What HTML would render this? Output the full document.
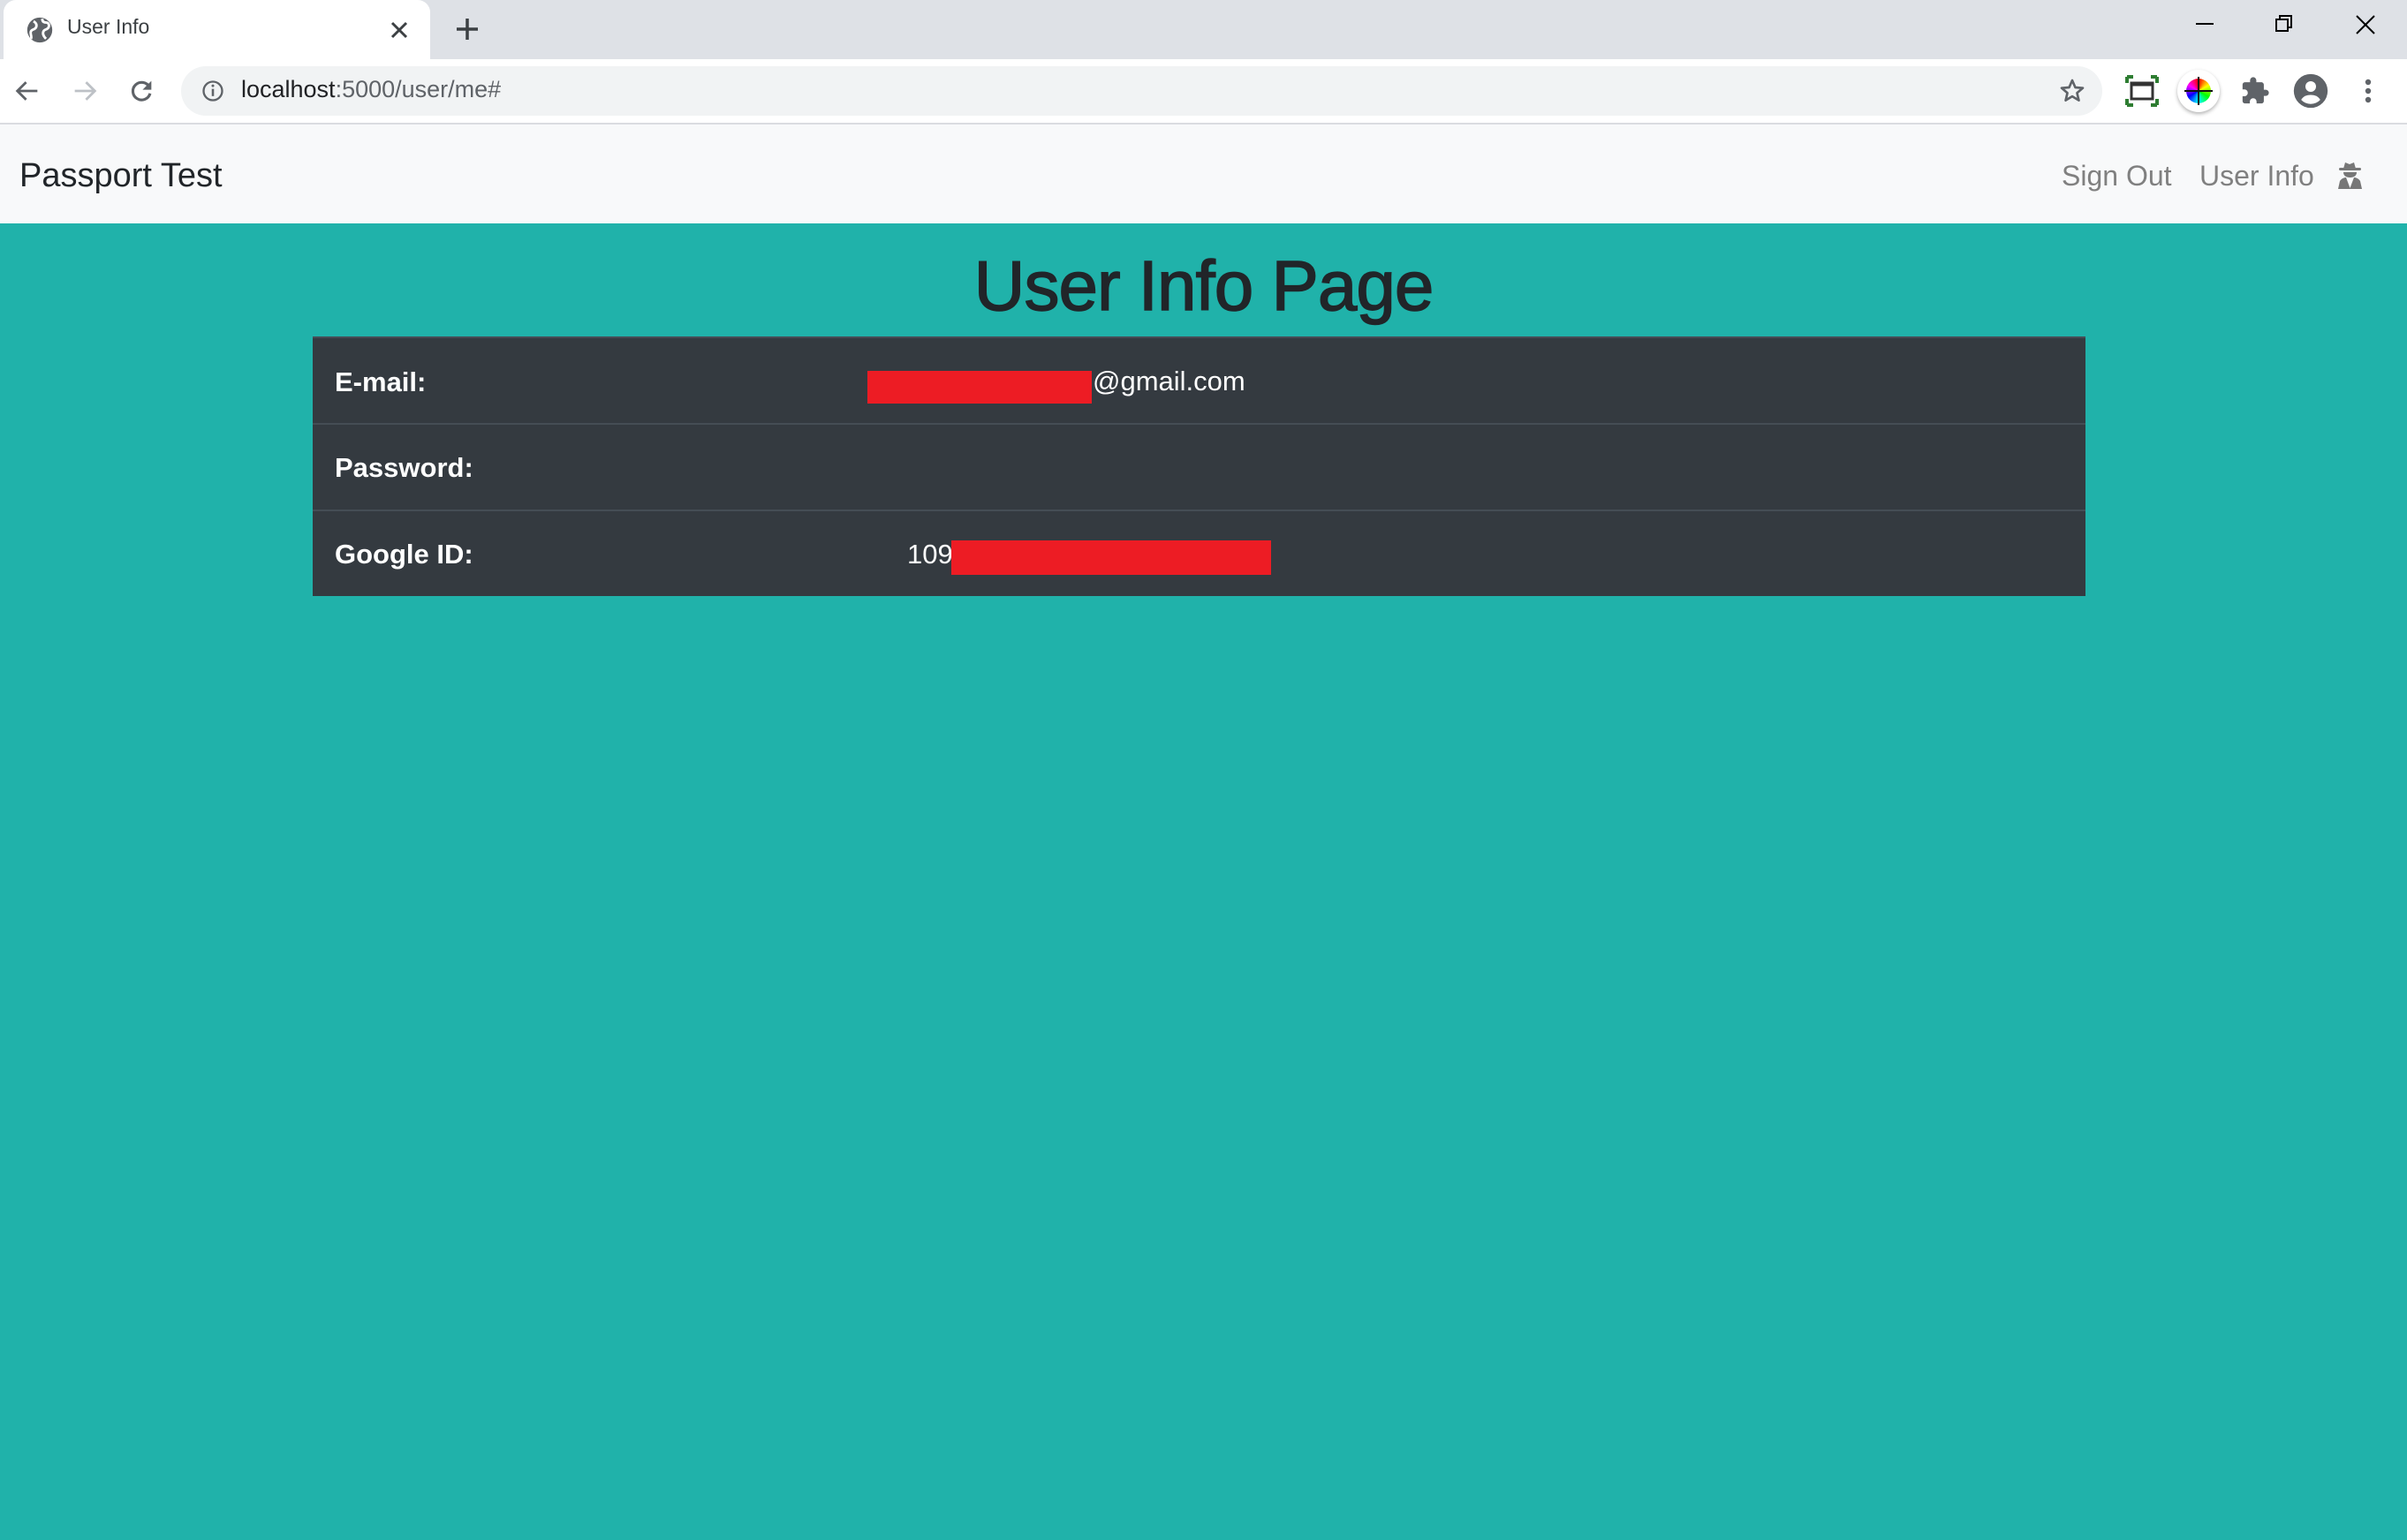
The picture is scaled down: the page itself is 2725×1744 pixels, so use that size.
<!DOCTYPE html>
<html><head><meta charset="utf-8"><style>
*{margin:0;padding:0;box-sizing:border-box}
body{width:2725px;height:1744px;position:relative;overflow:hidden;background:#20b2aa;font-family:"Liberation Sans",sans-serif}
.a{position:absolute}
</style></head><body>
<div class="a" style="left:0;top:0;width:2725px;height:67px;background:#dee1e6"></div>
<div class="a" style="left:4px;top:0;width:483px;height:67px;background:#fff;border-radius:14px 14px 0 0"></div>
<svg class="a" style="left:28px;top:17px" width="34" height="34" viewBox="0 0 24 24"><circle cx="12" cy="12" r="10" fill="#5f6368"/><path d="M7 5c2 1 3 3 2 5s-3 1-4 3 1 4 0 6M14 3c0 2 1 3 3 3s3 2 2 4-3 1-4 3 0 4 2 6" stroke="#fff" stroke-width="2" fill="none"/></svg>
<div class="a" style="left:76px;top:17px;font-size:23px;color:#3c4043">User Info</div>
<svg class="a" style="left:440px;top:22px" width="24" height="24"><path d="M4 4L20 20M20 4L4 20" stroke="#3c4043" stroke-width="3"/></svg>
<svg class="a" style="left:514px;top:18px" width="30" height="30"><path d="M15 3V27M3 15H27" stroke="#3c4043" stroke-width="3.5"/></svg>
<svg class="a" style="left:2480px;top:16px" width="230" height="24"><path d="M6 11H26" stroke="#000" stroke-width="2"/><rect x="97" y="6" width="13" height="13" fill="none" stroke="#000" stroke-width="2"/><path d="M101 6V2H114V15H110" fill="none" stroke="#000" stroke-width="2"/><path d="M188 2L208 22M208 2L188 22" stroke="#000" stroke-width="2"/></svg>
<div class="a" style="left:0;top:67px;width:2725px;height:72px;background:#fff"></div>
<div class="a" style="left:0;top:139px;width:2725px;height:2px;background:#dadce0"></div>
<svg class="a" style="left:14px;top:86px" width="34" height="34" viewBox="0 0 24 24"><path d="M20 12H5M11 5L4 12L11 19" stroke="#5f6368" stroke-width="2" fill="none"/></svg>
<svg class="a" style="left:79px;top:86px" width="34" height="34" viewBox="0 0 24 24"><path d="M4 12H19M13 5L20 12L13 19" stroke="#bdc1c6" stroke-width="2" fill="none"/></svg>
<svg class="a" style="left:143px;top:86px" width="34" height="34" viewBox="0 0 24 24"><path d="M18.5 9A7 7 0 1 0 19 14" stroke="#5f6368" stroke-width="2.2" fill="none"/><path d="M20 4V11H13Z" fill="#5f6368"/></svg>
<div class="a" style="left:205px;top:75px;width:2175px;height:56px;background:#f1f3f4;border-radius:28px"></div>
<svg class="a" style="left:227px;top:89px" width="28" height="28" viewBox="0 0 24 24"><circle cx="12" cy="12" r="9" stroke="#5f6368" stroke-width="2" fill="none"/><path d="M12 10V17" stroke="#5f6368" stroke-width="2.2"/><circle cx="12" cy="7" r="1.3" fill="#5f6368"/></svg>
<div class="a" style="left:273px;top:86px;font-size:27px;color:#202124">localhost<span style="color:#5f6368">:5000/user/me#</span></div>
<svg class="a" style="left:2330px;top:87px" width="32" height="32" viewBox="0 0 24 24"><path d="M12 3l2.6 6 6.4.5-4.9 4.2 1.5 6.3L12 16.6 6.4 20l1.5-6.3L3 9.5 9.4 9z" stroke="#5f6368" stroke-width="2" fill="none" stroke-linejoin="round"/></svg>
<svg class="a" style="left:2406px;top:85px" width="38" height="36"><path d="M2 2h7M2 2v7M36 2h-7M36 2v7M2 34h7M2 34v-7M36 34h-7M36 34v-7" stroke="#2e7d32" stroke-width="4"/><rect x="7" y="9" width="24" height="18" fill="none" stroke="#333" stroke-width="3"/><path d="M7 11H31" stroke="#333" stroke-width="3"/></svg>
<div class="a" style="left:2465px;top:79px;width:48px;height:48px;border-radius:50%;background:#fff;box-shadow:0 2px 4px rgba(0,0,0,.3)"></div>
<div class="a" style="left:2475px;top:89px;width:28px;height:28px;border-radius:50%;background:conic-gradient(red,#ff0,#0f0,#0ff,#00f,#f0f,red)"></div>
<svg class="a" style="left:2471px;top:85px" width="36" height="36"><path d="M18 2V34M2 18H34" stroke="#111" stroke-width="2"/></svg>
<svg class="a" style="left:2536px;top:86px" width="34" height="34" viewBox="0 0 24 24"><path d="M20.5 11H19V7c0-1.1-.9-2-2-2h-4V3.5a2.5 2.5 0 0 0-5 0V5H4c-1.1 0-2 .9-2 2v3.8h1.5a2.7 2.7 0 0 1 0 5.4H2V20c0 1.1.9 2 2 2h3.8v-1.5a2.7 2.7 0 0 1 5.4 0V22H17c1.1 0 2-.9 2-2v-4h1.5a2.5 2.5 0 0 0 0-5z" fill="#5f6368"/></svg>
<svg class="a" style="left:2596px;top:83px" width="40" height="40" viewBox="0 0 24 24"><circle cx="12" cy="12" r="11.5" fill="#5f6368"/><circle cx="12" cy="9" r="3.6" fill="#fff"/><path d="M5.5 18c1.5-2.5 4-3.3 6.5-3.3s5 .8 6.5 3.3a8.8 8.8 0 0 1-13 0z" fill="#fff"/></svg>
<svg class="a" style="left:2673px;top:87px" width="16" height="32"><circle cx="8" cy="6" r="3.2" fill="#5f6368"/><circle cx="8" cy="16" r="3.2" fill="#5f6368"/><circle cx="8" cy="26" r="3.2" fill="#5f6368"/></svg>
<div class="a" style="left:0;top:141px;width:2725px;height:112px;background:#f8f9fa"></div>
<div class="a" style="left:22px;top:178px;font-size:38px;color:#212529">Passport Test</div>
<div class="a" style="left:2334px;top:181px;font-size:32px;color:#808080">Sign Out</div>
<div class="a" style="left:2490px;top:181px;font-size:32px;color:#808080">User Info</div>
<svg class="a" style="left:2645px;top:182px" width="31" height="32" viewBox="0 0 31 32"><path d="M8 9L10 2L15 4L20 2L22 9Z" fill="#777"/><rect x="3" y="8" width="25" height="3" rx="1.5" fill="#777"/><path d="M8 13H23C23 17 20 19 15.5 19S8 17 8 13Z" fill="#777"/><path d="M2 32L4 23C6 20 9 19 11 19L15.5 31L20 19C22 19 25 20 27 23L29 32Z" fill="#777"/><path d="M13 20L15.5 26L18 20Z" fill="#fff"/></svg>
<div class="a" style="left:0;top:278px;width:2725px;text-align:center;font-size:80px;color:#212529;-webkit-text-stroke:1.5px #212529;letter-spacing:-1px">User Info Page</div>
<div class="a" style="left:354px;top:381px;width:2007px;height:294px;background:#343a40;border-top:2px solid #454d55"></div>
<div class="a" style="left:354px;top:479px;width:2007px;height:2px;background:#454d55"></div>
<div class="a" style="left:354px;top:577px;width:2007px;height:2px;background:#454d55"></div>
<div class="a" style="left:379px;top:415px;font-size:31px;font-weight:bold;color:#fff">E-mail:</div>
<div class="a" style="left:379px;top:512px;font-size:31px;font-weight:bold;color:#fff">Password:</div>
<div class="a" style="left:379px;top:610px;font-size:31px;font-weight:bold;color:#fff">Google ID:</div>
<div class="a" style="left:982px;top:420px;width:254px;height:37px;background:#ed1c24"></div>
<div class="a" style="left:1237px;top:414px;font-size:31px;color:#fff">@gmail.com</div>
<div class="a" style="left:1027px;top:610px;font-size:31px;color:#fff">109</div>
<div class="a" style="left:1077px;top:612px;width:362px;height:39px;background:#ed1c24"></div>
</body></html>
